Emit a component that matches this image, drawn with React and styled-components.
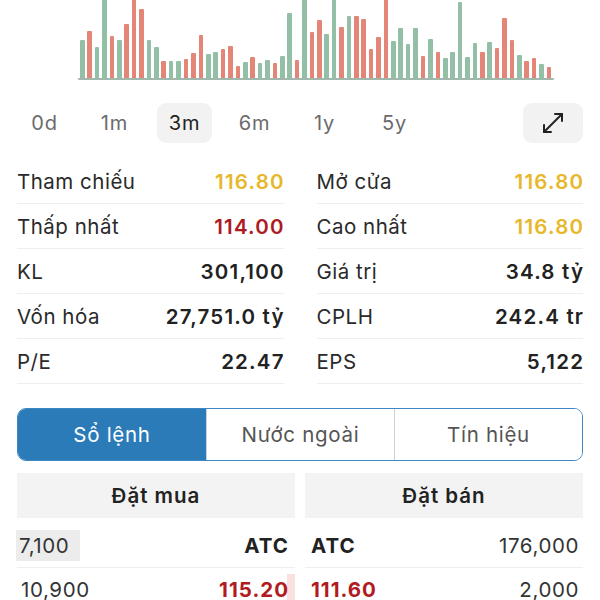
import React from "react";
import styled, { createGlobalStyle } from "styled-components";

const Global = createGlobalStyle`
  html, body { margin: 0; padding: 0; background: #fff; }
  body { font-family: Inter, "Noto Sans", sans-serif; color: #222; overflow: hidden; }
`;

const Page = styled.div`
  width: 600px;
  height: 600px;
  overflow: hidden;
  box-sizing: border-box;
  padding: 0 17px;
`;

const ChartWrap = styled.div`
  margin: 0 29px 0 61px;
  height: 80px;
  display: flex;
  flex-direction: column;
`;

const Bars = styled.div`
  flex: 1;
  display: flex;
  align-items: flex-end;
  justify-content: space-between;
  padding: 0 2px;
  overflow: hidden;
`;

const Bar = styled.div`
  width: 4.6px;
  border-radius: 1px 1px 0 0;
  background: ${(p) => (p.$up ? "#93bfa7" : "#e38577")};
`;

const Axis = styled.div`
  height: 2px;
  border-radius: 2px;
  background: #9fb8ab;
`;

const RangeRow = styled.div`
  margin-top: 23px;
  height: 40px;
  display: flex;
  align-items: center;
`;

const RangeBtn = styled.div`
  width: 55px;
  height: 40px;
  margin-right: 15px;
  display: flex;
  align-items: center;
  justify-content: center;
  border-radius: 9px;
  font-size: 20px;
  letter-spacing: 0.8px;
  color: ${(p) => (p.$active ? "#222" : "#6b6b6b")};
  background: ${(p) => (p.$active ? "#f2f2f2" : "transparent")};
`;

const Spacer = styled.div`
  flex: 1;
`;

const ExpandBtn = styled.div`
  width: 60px;
  height: 40px;
  border-radius: 9px;
  background: #f2f2f2;
  display: flex;
  align-items: center;
  justify-content: center;
  color: #222;
`;

const Stats = styled.div`
  margin-top: 16px;
  display: grid;
  grid-template-columns: 1fr 1fr;
  column-gap: 33px;
`;

const StatRow = styled.div`
  height: 44px;
  border-bottom: 1px solid #efefef;
  display: flex;
  align-items: center;
  justify-content: space-between;
  font-size: 20.5px;
`;

const Label = styled.span`
  color: #2a2a2a;
  letter-spacing: 0.5px;
`;

const Value = styled.span`
  font-weight: 600;
  letter-spacing: 1.2px;
  margin-right: -1.2px;
  color: ${(p) => p.$color || "#222"};
`;

const Tabs = styled.div`
  margin-top: 24px;
  height: 53px;
  box-sizing: border-box;
  border: 1.5px solid #3b86c3;
  border-radius: 9px;
  overflow: hidden;
  display: grid;
  grid-template-columns: 1fr 1fr 1fr;
`;

const Tab = styled.div`
  display: flex;
  align-items: center;
  justify-content: center;
  font-size: 20.5px;
  letter-spacing: 0.7px;
  color: ${(p) => (p.$active ? "#fff" : "#555")};
  background: ${(p) => (p.$active ? "#2b7bb9" : "#fff")};
  border-left: ${(p) => (p.$first ? "none" : "1px solid #c9d3dc")};
`;

const Book = styled.div`
  margin-top: 12px;
  display: grid;
  grid-template-columns: 1fr 1fr;
  column-gap: 10px;
`;

const BookHead = styled.div`
  height: 45px;
  background: #f3f3f3;
  display: flex;
  align-items: center;
  justify-content: center;
  font-size: 20.5px;
  font-weight: 600;
  letter-spacing: 1px;
  color: #222;
  margin-bottom: 6px;
`;

const BookRow = styled.div`
  height: 43px;
  border-bottom: 1px solid #efefef;
  display: flex;
  align-items: center;
  justify-content: space-between;
  font-size: 20.5px;
  position: relative;
`;

const Qty = styled.span`
  display: flex;
  align-items: center;
  height: 31px;
  padding: ${(p) => (p.$bg ? "0 11px 0 3px" : "0 4px")};
  background: ${(p) => (p.$bg ? "#ececec" : "transparent")};
  color: #333;
  letter-spacing: 0.6px;
  margin-left: ${(p) => (p.$bg ? "-1px" : "0")};
`;

const Price = styled.span`
  font-weight: 700;
  letter-spacing: 1px;
  color: ${(p) => p.$color || "#222"};
  padding: 0 6px;
  position: relative;
  z-index: 1;
`;

const VolBar = styled.div`
  position: absolute;
  right: 0;
  top: 6px;
  bottom: 0;
  background: #fbe0e0;
`;

const ExpandIcon = () => (
  <svg width="24" height="24" viewBox="0 0 24 24" fill="none" stroke="currentColor"
    strokeWidth="2" strokeLinecap="round" strokeLinejoin="round">
    <line x1="3" y1="21" x2="21" y2="3" />
    <polyline points="14,3 21,3 21,10" />
    <polyline points="3,14 3,21 10,21" />
  </svg>
);

const bars = [
  [38, 1], [47, 0], [31, 1], [80, 1], [42, 0], [38, 1], [54, 0], [80, 0], [69, 0], [38, 1],
  [31, 1], [17, 0], [17, 1], [17, 1], [19, 0], [25, 0], [43, 0], [24, 1], [26, 1], [29, 0],
  [32, 0], [12, 0], [16, 1], [21, 0], [15, 1], [18, 1], [15, 0], [22, 1], [65, 1], [18, 0],
  [80, 1], [46, 0], [58, 0], [44, 1], [80, 1], [51, 0], [62, 1], [62, 0], [59, 0], [29, 0],
  [41, 0], [80, 0], [37, 1], [50, 1], [34, 1], [50, 1], [22, 0], [39, 1], [26, 0], [20, 1],
  [26, 1], [76, 1], [21, 1], [35, 1], [26, 0], [36, 1], [30, 0], [60, 0], [38, 0], [23, 1],
  [17, 0], [20, 0], [14, 1], [11, 0],
];

const ranges = ["0d", "1m", "3m", "6m", "1y", "5y"];

const left = [
  ["Tham chiếu", "116.80", "#e6b82a"],
  ["Thấp nhất", "114.00", "#ad1a1f"],
  ["KL", "301,100"],
  ["Vốn hóa", "27,751.0 tỷ"],
  ["P/E", "22.47"],
];
const right = [
  ["Mở cửa", "116.80", "#e6b82a"],
  ["Cao nhất", "116.80", "#e6b82a"],
  ["Giá trị", "34.8 tỷ"],
  ["CPLH", "242.4 tr"],
  ["EPS", "5,122"],
];

export default function App() {
  return (
    <Page>
      <Global />
      <ChartWrap>
        <Bars>
          {bars.map(([h, up], i) => (
            <Bar key={i} $up={up} style={{ height: `${h}px` }} />
          ))}
        </Bars>
        <Axis />
      </ChartWrap>

      <RangeRow>
        {ranges.map((r) => (
          <RangeBtn key={r} $active={r === "3m"}>{r}</RangeBtn>
        ))}
        <Spacer />
        <ExpandBtn>
          <ExpandIcon />
        </ExpandBtn>
      </RangeRow>

      <Stats>
        <div>
          {left.map(([l, v, c]) => (
            <StatRow key={l}>
              <Label>{l}</Label>
              <Value $color={c}>{v}</Value>
            </StatRow>
          ))}
        </div>
        <div>
          {right.map(([l, v, c]) => (
            <StatRow key={l}>
              <Label>{l}</Label>
              <Value $color={c}>{v}</Value>
            </StatRow>
          ))}
        </div>
      </Stats>

      <Tabs>
        <Tab $active $first>Sổ lệnh</Tab>
        <Tab>Nước ngoài</Tab>
        <Tab>Tín hiệu</Tab>
      </Tabs>

      <Book>
        <div>
          <BookHead>Đặt mua</BookHead>
          <BookRow>
            <Qty $bg>7,100</Qty>
            <Price>ATC</Price>
          </BookRow>
          <BookRow>
            <Qty>10,900</Qty>
            <VolBar style={{ width: "8px" }} />
            <Price $color="#b01c22">115.20</Price>
          </BookRow>
        </div>
        <div>
          <BookHead>Đặt bán</BookHead>
          <BookRow>
            <Price>ATC</Price>
            <Qty>176,000</Qty>
          </BookRow>
          <BookRow>
            <Price $color="#b01c22">111.60</Price>
            <Qty>2,000</Qty>
          </BookRow>
        </div>
      </Book>
    </Page>
  );
}
